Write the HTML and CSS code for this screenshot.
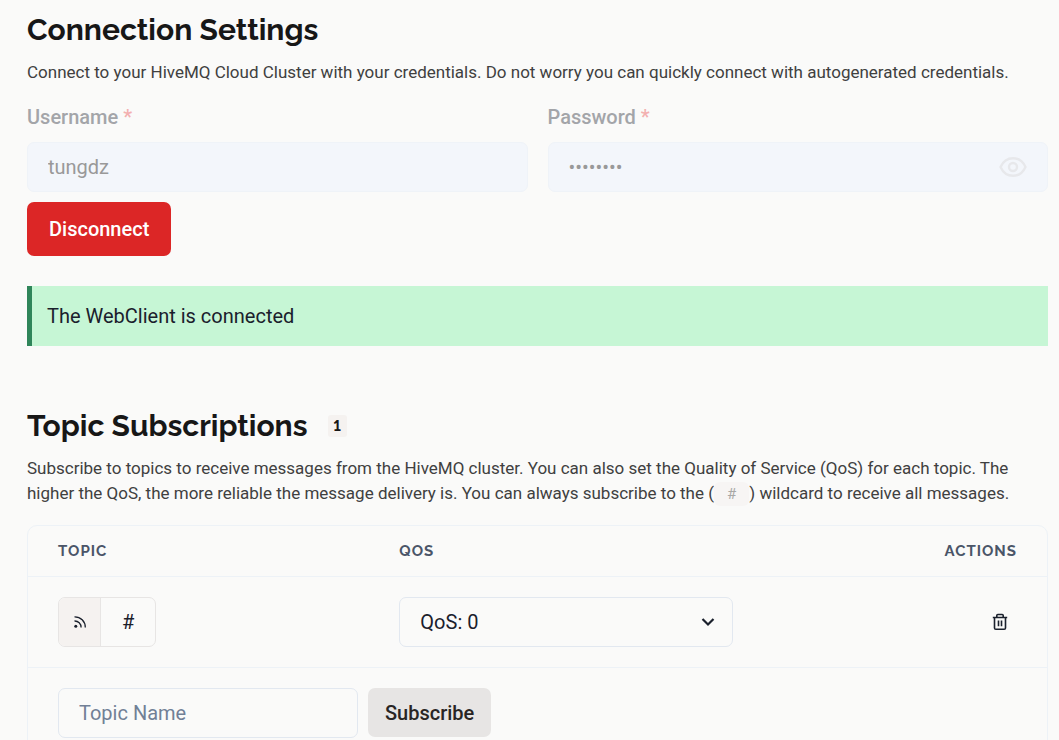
FILE: index.html
```html
<!DOCTYPE html>
<html lang="en">
<head>
<meta charset="utf-8">
<meta name="viewport" content="width=device-width, initial-scale=1">
<title>Web Client</title>
<link rel="stylesheet" href="styles.css">
</head>
<body>
<main class="page">
  <section class="section">
    <h2 class="title">Connection Settings</h2>
    <p class="lead">Connect to your HiveMQ Cloud Cluster with your credentials. Do not worry you can quickly connect with autogenerated credentials.</p>
    <form class="credentials">
      <div class="field">
        <label class="label" for="username">Username <span class="required">*</span></label>
        <input class="input input-disabled" id="username" type="text" value="tungdz" disabled>
      </div>
      <div class="field">
        <label class="label" for="password">Password <span class="required">*</span></label>
        <div class="password">
          <input class="input input-disabled input-password" id="password" type="password" value="password" disabled>
          <button class="reveal" type="button" aria-label="Show password" disabled>
            <svg width="30" height="30" viewBox="0 0 30 30" fill="none" stroke="currentColor" stroke-width="2.4">
              <path d="M2.500 15C5 9.500 9.500 6.200 15 6.200S25 9.500 27.500 15C25 20.500 20.500 23.800 15 23.800S5 20.500 2.500 15Z" stroke-linejoin="round"/>
              <circle cx="15" cy="15" r="4"/>
            </svg>
          </button>
        </div>
      </div>
    </form>
    <button class="button button-danger" type="button">Disconnect</button>
    <div class="alert" role="status">The WebClient is connected</div>
  </section>

  <section class="section">
    <div class="heading">
      <h2 class="title">Topic Subscriptions</h2>
      <span class="badge">1</span>
    </div>
    <p class="lead">Subscribe to topics to receive messages from the HiveMQ cluster. You can also set the Quality of Service (QoS) for each topic. The higher the QoS, the more reliable the message delivery is. You can always subscribe to the (<code class="code">#</code>) wildcard to receive all messages.</p>
    <div class="panel">
      <table class="table">
        <thead>
          <tr>
            <th class="col-topic">Topic</th>
            <th class="col-qos">QoS</th>
            <th class="col-actions">Actions</th>
          </tr>
        </thead>
        <tbody>
          <tr>
            <td>
              <div class="topic">
                <span class="topic-icon">
                  <svg width="14" height="14" viewBox="0 0 14 14" fill="none" stroke="currentColor" stroke-width="1.300">
                    <path d="M1.500 1.800A10.500 10.500 0 0 1 12.300 12.500M1.500 6A6.300 6.300 0 0 1 8.100 12.500"/>
                    <circle cx="2.800" cy="11.200" r="1.500" fill="currentColor" stroke="none"/>
                  </svg>
                </span>
                <span class="topic-name">#</span>
              </div>
            </td>
            <td>
              <div class="select-box">
                <select class="input select" aria-label="QoS">
                  <option>QoS: 0</option>
                  <option>QoS: 1</option>
                  <option>QoS: 2</option>
                </select>
                <svg class="chevron" width="14" height="10" viewBox="0 0 14 10" fill="none" stroke="currentColor" stroke-width="2.200">
                  <path d="M1.500 2L7 7.500L12.500 2"/>
                </svg>
              </div>
            </td>
            <td>
              <button class="icon-button" type="button" aria-label="Delete subscription">
                <svg width="16" height="18" viewBox="0 0 16 18" fill="none" stroke="currentColor" stroke-width="1.600">
                  <path d="M.800 4.500H15.200M4.800 4.500V2.500Q4.800 1.500 5.800 1.500H10.200Q11.200 1.500 11.200 2.500V4.500M2.500 4.500V15Q2.500 16.300 3.800 16.300H12.200Q13.500 16.300 13.500 15V4.500M6.500 7.500V13.300M9.500 7.500V13.300"/>
                </svg>
              </button>
            </td>
          </tr>
          <tr>
            <td colspan="3">
              <form class="subscribe">
                <input class="input topic-input" type="text" placeholder="Topic Name" aria-label="Topic Name">
                <button class="button button-muted" type="button">Subscribe</button>
              </form>
            </td>
          </tr>
        </tbody>
      </table>
    </div>
  </section>
</main>
</body>
</html>
```
FILE: styles.css
```css
* {
  box-sizing: border-box;
}

body {
  margin: 0;
  background: #fafaf9;
  color: #1a202c;
  font-family: Roboto, "Liberation Sans", sans-serif;
  font-size: 20px;
  line-height: 30px;
}

.page {
  display: flex;
  flex-direction: column;
  gap: 60px;
  padding: 10px 11px 20px 27px;
}

.section {
  display: flex;
  flex-direction: column;
}

.title {
  margin: 0;
  color: #171717;
  font-family: Raleway, Lato, sans-serif;
  font-size: 30px;
  font-weight: 700;
  line-height: 40px;
}

.heading {
  display: flex;
  align-items: center;
  gap: 20px;
}

.badge {
  padding: 0 6px;
  border-radius: 3px;
  background: #f5f2f0;
  color: #171717;
  font-family: Raleway, Lato, sans-serif;
  font-size: 15px;
  font-variant-numeric: lining-nums;
  font-weight: 700;
  line-height: 22px;
}

.lead {
  margin: 10px 0 0;
  color: #404040;
  font-size: 17px;
  line-height: 25px;
}

.code {
  display: inline-block;
  padding: 0 13px;
  border-radius: 6px;
  background: #f7f5f4;
  color: #a8a8a6;
  font-family: Roboto, sans-serif;
  font-size: 15px;
  line-height: 24px;
}

.credentials {
  display: grid;
  grid-template-columns: 1fr 1fr;
  gap: 20px;
  margin-top: 17px;
}

.field {
  display: flex;
  flex-direction: column;
  gap: 10px;
}

.label {
  color: #a3a5a9;
  font-weight: 500;
}

.required {
  color: #f3b0b0;
}

.input {
  width: 100%;
  height: 50px;
  padding: 0 20px;
  border: 1px solid #e2e8f0;
  border-radius: 7px;
  background: transparent;
  color: #1a202c;
  font: inherit;
}

.input::placeholder {
  color: #718096;
  opacity: 1;
}

.input-disabled {
  border-color: #eff3f8;
  background: #f3f6fb;
  color: #999999;
}

.input-password {
  padding-right: 60px;
}

.password,
.select-box {
  position: relative;
}

.reveal {
  position: absolute;
  top: 10px;
  right: 20px;
  display: flex;
  padding: 0;
  border: 0;
  background: none;
  color: #e7e8eb;
}

.button {
  border: 0;
  border-radius: 7px;
  font: inherit;
  font-weight: 500;
}

.button-danger {
  align-self: flex-start;
  margin-top: 10px;
  padding: 12px 22px;
  background: #dc2626;
  color: #ffffff;
}

.button-muted {
  height: 49px;
  padding: 0 17px;
  background: #e7e5e4;
  color: #292524;
}

.alert {
  margin-top: 30px;
  padding: 15px;
  border-left: 5px solid #2f855a;
  background: #c6f6d5;
}

.panel {
  margin-top: 19px;
  border: 1px solid #edf2f7;
  border-radius: 10px;
}

.table {
  width: 100%;
  border-spacing: 0;
  table-layout: fixed;
}

.table th {
  padding: 15px 30px;
  color: #4a5568;
  font-family: Raleway, Lato, sans-serif;
  font-size: 15px;
  font-weight: 700;
  letter-spacing: 1px;
  line-height: 20px;
  text-align: left;
  text-transform: uppercase;
}

.table td {
  padding: 20px 30px;
  border-top: 1px solid #edf2f7;
}

.table .col-topic {
  width: 33.5%;
}

.table .col-qos {
  width: 38.6%;
}

.table .col-actions {
  text-align: right;
}

.topic {
  display: inline-flex;
  height: 50px;
  overflow: hidden;
  border: 1px solid #e7e5e4;
  border-radius: 7px;
  vertical-align: top;
}

.topic-icon {
  display: flex;
  align-items: center;
  justify-content: center;
  width: 42px;
  border-right: 1px solid #e7e5e4;
  background: #f5f2f0;
}

.topic-name {
  padding: 9px 21px;
}

.select {
  display: block;
  appearance: none;
}

.chevron {
  position: absolute;
  top: 20px;
  right: 18px;
  pointer-events: none;
}

.icon-button {
  display: block;
  margin-left: auto;
  padding: 0 9px;
  border: 0;
  background: none;
  color: inherit;
}

.icon-button svg {
  display: block;
}

.subscribe {
  display: flex;
  gap: 10px;
}

.topic-input {
  width: 300px;
}
```
